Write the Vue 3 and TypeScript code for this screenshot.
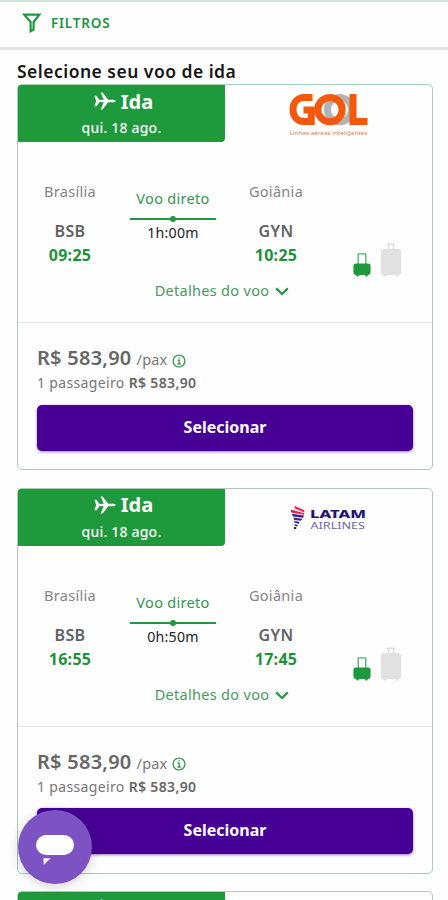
<script setup lang="ts">
interface Flight {
  id: number
  airline: 'gol' | 'latam'
  departure: string
  arrival: string
  duration: string
}

const flights: Flight[] = [
  { id: 1, airline: 'gol', departure: '09:25', arrival: '10:25', duration: '1h:00m' },
  { id: 2, airline: 'latam', departure: '16:55', arrival: '17:45', duration: '0h:50m' },
]
</script>

<template>
  <main class="screen">
    <header class="filters">
      <svg class="funnel" width="20" height="20" viewBox="0 0 20 20">
        <path d="M2.2 1.6H17.4L11.6 9V16.6L8.6 18.2V9Z" />
      </svg>
      <span class="filters-label">FILTROS</span>
    </header>

    <h1 class="title">Selecione seu voo de ida</h1>

    <section class="list">
      <article v-for="flight in flights" :key="flight.id" class="card">
        <div class="card-head">
          <div class="leg">
            <div class="leg-name">
              <svg width="22" height="18" viewBox="0 0 22 18">
                <path d="M.4 3.8H2.4L5.6 7.9L9.8 7.7L6.6.6H8.6L14.2 7.7H19.2Q21.6 8 21.8 9Q21.6 10 19.2 10.3H14.2L8.6 17.4H6.6L9.8 10.3L5.6 10.1L2.4 14.2H.4L2.2 9Z" />
              </svg>
              <span>Ida</span>
            </div>
            <div class="leg-date">qui. 18 ago.</div>
          </div>
          <div class="airline">
            <svg v-if="flight.airline === 'gol'" class="gol" width="82" height="46" viewBox="0 0 82 46">
              <g fill="none" stroke-width="7">
                <circle cx="51.5" cy="17.6" r="12.2" stroke="#b3b3b3" />
                <path d="M24.5 5.6H16.5C9 5.6 5 11 5 17.6S9 29.6 16.5 29.6H23.3V18H15.5" stroke="#f4590b" />
                <circle cx="42" cy="17.6" r="12.2" stroke="#f4590b" />
                <path d="M65 2V29.6H79.5" stroke="#f4590b" />
              </g>
              <text x="1.5" y="43" textLength="78" lengthAdjust="spacingAndGlyphs">Linhas aéreas inteligentes</text>
            </svg>
            <svg v-else class="latam" width="78" height="26" viewBox="0 0 78 26">
              <path d="M4.6 1L14.3 5.2V7.4L4.4 3.2Z" fill="#e8204e" />
              <path d="M.8 4.4L14.3 8.2L14 9.8L1.2 7.4Z" fill="#e8204e" />
              <path d="M1.8 8.8L14 10.6L13.2 12.8L3 11.6Z" fill="#36258b" />
              <path d="M3.4 12.6L12.6 13.7L10.8 15.8L4.2 14.9Z" fill="#4b2386" />
              <path d="M4 16L9.5 17.1L8.8 18.7L4.6 17.6ZM4.6 19.2L7.9 20.1L7.1 21.5L4.5 20.6ZM4 22H6.2V24H4Z" fill="#241374" />
              <text class="latam-name" x="20" y="13.4" textLength="56" lengthAdjust="spacingAndGlyphs">LATAM</text>
              <text class="latam-sub" x="20.5" y="23.6" textLength="54.5" lengthAdjust="spacingAndGlyphs">AIRLINES</text>
            </svg>
          </div>
        </div>

        <div class="route">
          <div class="stop">
            <div class="city">Brasília</div>
            <div class="code">BSB</div>
            <div class="time">{{ flight.departure }}</div>
          </div>
          <div class="path">
            <div class="direct">Voo direto</div>
            <div class="line"><i class="dot"></i></div>
            <div class="duration">{{ flight.duration }}</div>
          </div>
          <div class="stop">
            <div class="city">Goiânia</div>
            <div class="code">GYN</div>
            <div class="time">{{ flight.arrival }}</div>
          </div>
          <div class="bags">
            <svg width="18" height="24" viewBox="0 0 18 24">
              <path d="M5.2 11V1.4Q5.2.8 5.8.8H12.2Q12.8.8 12.8 1.4V11" fill="none" stroke="#4fae68" stroke-width="1.3" />
              <path d="M3 10.5H15Q17.6 10.5 17.6 13V18.8Q17.6 21.9 15 21.9H14.8L14.2 23.6H12.6L12 21.9H6L5.4 23.6H3.8L3.2 21.9Q.4 21.9.4 18.8V13Q.4 10.5 3 10.5Z" fill="#1e993c" />
            </svg>
            <svg width="22" height="34" viewBox="0 0 22 34">
              <path d="M8.5 6V1.5M13.5 6V1.5M6.8 1.2H15.2" fill="none" stroke="#dedede" stroke-width="1.5" />
              <path d="M4 6H18Q21 6 21 9V29Q21 31.8 18.5 32V33.5H15.5V32H6.5V33.5H3.5V32Q1 31.8 1 29V9Q1 6 4 6Z" fill="#e1e1e1" />
            </svg>
          </div>
        </div>

        <div class="details">
          <span>Detalhes do voo</span>
          <svg width="14" height="9" viewBox="0 0 14 9"><path d="M1.2 1.4L7 7L12.8 1.4" /></svg>
        </div>

        <div class="fare">
          <div class="price">
            <strong>R$ 583,90</strong>
            <span class="pax">/pax</span>
            <svg width="14" height="14" viewBox="0 0 14 14">
              <circle cx="7" cy="7" r="5.9" />
              <path d="M5.6 6.3H7.2V10M5.4 10H8.8M6.5 3.8H7.6" />
            </svg>
          </div>
          <div class="total"><span class="count">1 passageiro</span> <b>R$ 583,90</b></div>
          <button class="select" type="button">Selecionar</button>
        </div>
      </article>

      <article class="card">
        <div class="card-head">
          <div class="leg">
            <div class="leg-name">
              <svg width="22" height="18" viewBox="0 0 22 18">
                <path d="M.4 3.8H2.4L5.6 7.9L9.8 7.7L6.6.6H8.6L14.2 7.7H19.2Q21.6 8 21.8 9Q21.6 10 19.2 10.3H14.2L8.6 17.4H6.6L9.8 10.3L5.6 10.1L2.4 14.2H.4L2.2 9Z" />
              </svg>
              <span>Ida</span>
            </div>
          </div>
        </div>
      </article>
    </section>

    <button class="chat" type="button" aria-label="Chat">
      <svg width="38" height="32" viewBox="0 0 38 32">
        <rect x="0" y="0" width="38" height="20" rx="10" />
        <path d="M7.4 23.3H14.6L7.8 29.8Z" />
      </svg>
    </button>
  </main>
</template>

<style>
body {
  margin: 0;
  background: #fefefe;
}
</style>

<style scoped>
.screen {
  position: relative;
  box-sizing: border-box;
  width: 448px;
  height: 900px;
  overflow: hidden;
  background: #fefefe;
  border-top: 2px solid #d3e5db;
  font-family: "Noto Sans", "Open Sans", sans-serif;
  color: #666;
}
.filters {
  box-sizing: border-box;
  height: 48px;
  display: flex;
  align-items: center;
  gap: 9px;
  padding: 0 0 4px 22px;
  border-bottom: 3px solid #e3e3e3;
}
.funnel path {
  fill: none;
  stroke: #1e993c;
  stroke-width: 2.2;
}
.filters-label {
  font-size: 13.5px;
  line-height: 20px;
  font-weight: 600;
  letter-spacing: 0.8px;
  color: #23943f;
}
.title {
  margin: 0;
  height: 34px;
  padding-left: 17px;
  font-size: 17.5px;
  line-height: 43px;
  font-weight: 600;
  letter-spacing: 0.48px;
  color: #161616;
  white-space: nowrap;
}
.list {
  display: flex;
  flex-direction: column;
  gap: 17.6px;
  padding-left: 17px;
}
.card {
  box-sizing: border-box;
  width: 416px;
  height: 386px;
  border: 1px solid #a9cdb8;
  border-radius: 5px;
  flex: none;
}
.card-head {
  display: flex;
  height: 57px;
}
.leg {
  width: 207px;
  background: #1e993c;
  border-radius: 3px 0 4px 0;
  color: #fff;
  text-align: center;
}
.leg-name {
  display: flex;
  justify-content: center;
  align-items: center;
  gap: 5px;
  height: 32px;
  padding-left: 4px;
  font-size: 20px;
  font-weight: 700;
}
.leg-name svg {
  fill: #fff;
}
.leg-date {
  font-size: 14px;
  line-height: 22px;
  font-weight: 500;
  letter-spacing: 0.2px;
}
.airline {
  flex: 1;
  display: flex;
  justify-content: center;
}
.gol {
  margin-top: 7px;
}
.gol text {
  font-size: 6px;
  fill: #d9824c;
}
.latam {
  margin-top: 16px;
}
.latam-name {
  font-size: 11px;
  font-weight: 800;
  fill: #241374;
}
.latam-sub {
  font-size: 8px;
  fill: #6f66a5;
}
.route {
  display: grid;
  grid-template-columns: 104px 102px 104px 1fr;
  height: 137px;
  text-align: center;
}
.city {
  padding-top: 39px;
  font-size: 14.5px;
  line-height: 20px;
  letter-spacing: 0.3px;
  color: #858585;
}
.code {
  padding-top: 18px;
  font-size: 16px;
  line-height: 24px;
  font-weight: 600;
  letter-spacing: 0.3px;
  color: #626262;
}
.time {
  font-size: 16px;
  line-height: 24px;
  font-weight: 700;
  letter-spacing: 0.3px;
  color: #1e923a;
}
.direct {
  padding-top: 46px;
  font-size: 14.5px;
  line-height: 20px;
  letter-spacing: 0.3px;
  color: #339650;
}
.line {
  display: flex;
  align-items: center;
  justify-content: center;
  height: 2px;
  margin: 10px 8px 0;
  background: #22973f;
}
.dot {
  width: 6px;
  height: 6px;
  border-radius: 50%;
  background: #22973f;
}
.duration {
  margin-top: 3px;
  font-size: 14.2px;
  line-height: 20px;
  letter-spacing: 0.25px;
  color: #222;
}
.bags {
  display: flex;
  align-items: flex-end;
  gap: 9px;
  padding: 0 0 2px 25px;
}
.details {
  box-sizing: border-box;
  height: 44px;
  display: flex;
  justify-content: center;
  gap: 6px;
  padding: 0 6px 0 0;
  border-bottom: 1px solid #e4e4e4;
  font-size: 14.5px;
  line-height: 22px;
  letter-spacing: 0.3px;
  color: #469b5d;
  white-space: nowrap;
}
.details svg {
  margin-top: 8px;
  fill: none;
  stroke: #25953f;
  stroke-width: 2.2;
}
.fare {
  padding: 20px 19px 0;
}
.price {
  display: flex;
  align-items: baseline;
  height: 30px;
  line-height: 30px;
}
.price strong {
  font-size: 20px;
  font-weight: 600;
  letter-spacing: 0.25px;
  color: #666;
}
.pax {
  margin: 0 5px 0 5px;
  font-size: 14.5px;
  letter-spacing: 0.2px;
  color: #777;
}
.price svg {
  align-self: center;
  margin-top: 5px;
  fill: none;
  stroke: #3d9c57;
  stroke-width: 1.4;
}
.total {
  font-size: 14px;
  line-height: 20px;
  letter-spacing: 0.35px;
  color: #777;
}
.total b {
  font-weight: 600;
  color: #666;
}
.select {
  display: block;
  width: 376px;
  height: 46px;
  margin-top: 11.6px;
  padding: 0 0 2px;
  border: 0;
  border-radius: 5px;
  background: #470096;
  box-shadow: 0 1px 3px #47009688;
  color: #fff;
  font-family: inherit;
  font-size: 16px;
  font-weight: 700;
}
.chat {
  position: absolute;
  left: 18px;
  top: 808px;
  width: 74px;
  height: 74px;
  padding: 0;
  border: 0;
  border-radius: 50%;
  background: #7d52c3;
  box-shadow: 0 2px 12px #0000002e;
}
.chat svg {
  display: block;
  margin: 8px auto 0;
  fill: #fff;
}
</style>
